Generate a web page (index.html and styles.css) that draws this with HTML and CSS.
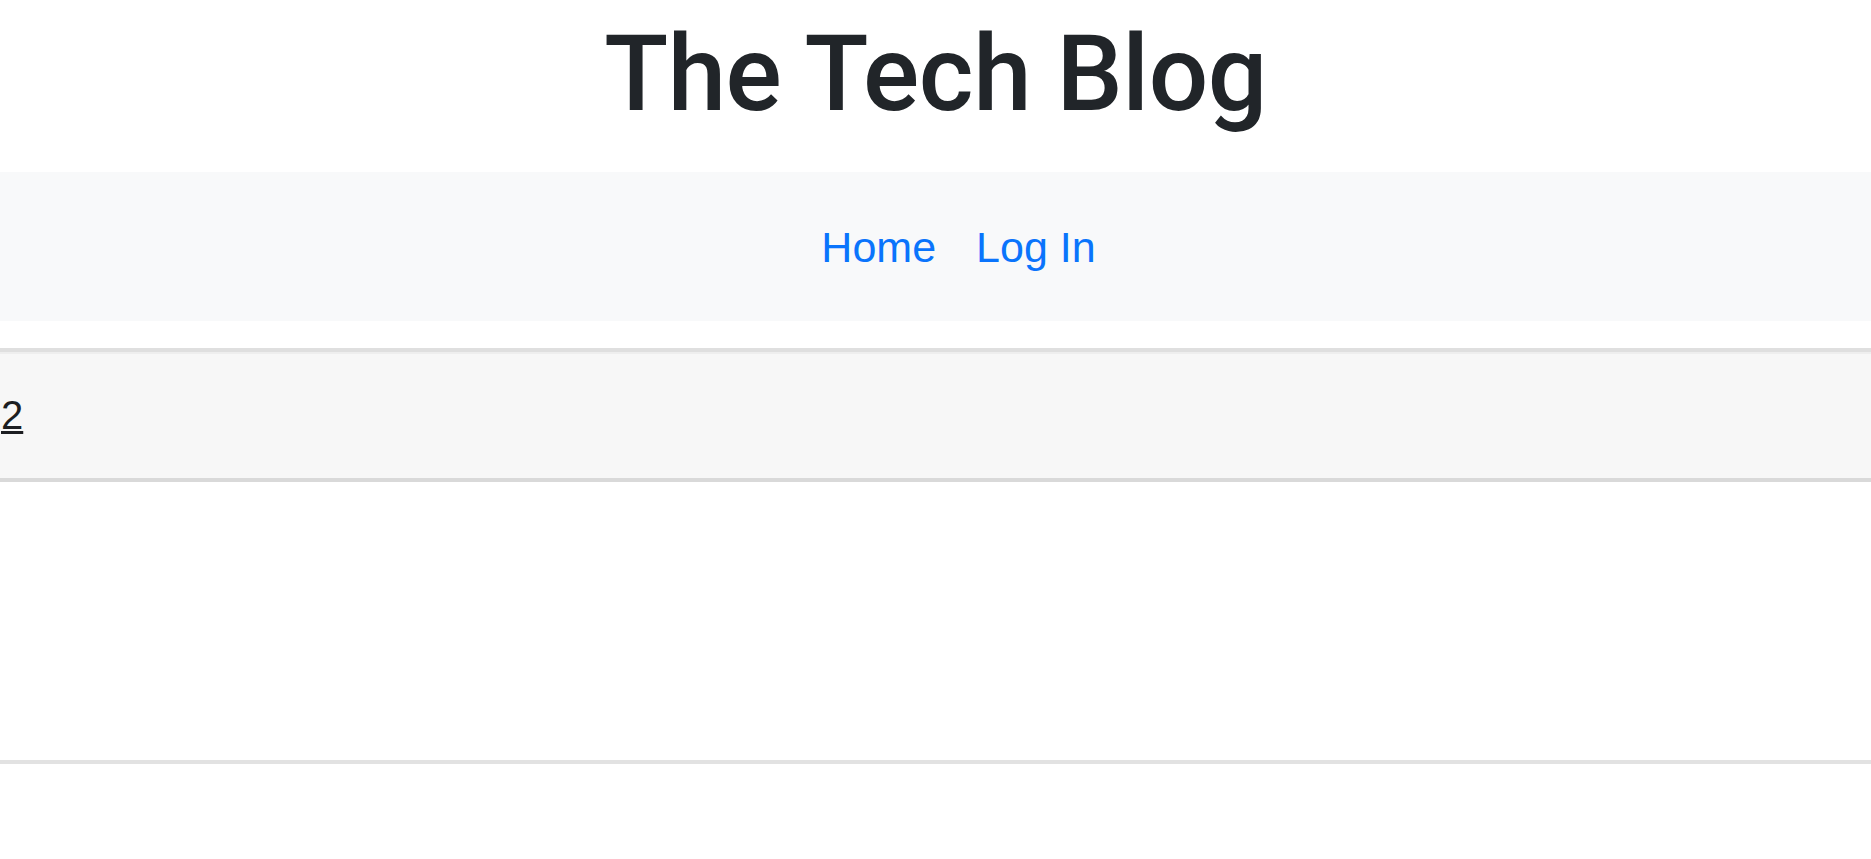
FILE: index.html
```html
<!DOCTYPE html>
<html lang="en">
<head>
<meta charset="utf-8">
<title>The Tech Blog</title>
<link rel="stylesheet" href="styles.css">
</head>
<body>
<header class="site-header">
  <h1 class="site-title">The Tech Blog</h1>
</header>
<nav class="site-nav">
  <ul class="nav-list">
    <li><a class="nav-link" href="#">Home</a></li>
    <li><a class="nav-link" href="#">Log In</a></li>
  </ul>
</nav>
<main class="main">
  <article class="post-card">
    <div class="post-header">
      <a class="post-link" href="#">2</a>
    </div>
    <div class="post-body"></div>
  </article>
</main>
</body>
</html>
```

FILE: styles.css
```css
html, body {
  margin: 0;
  padding: 0;
  background: #ffffff;
}

body {
  font-family: "Liberation Sans", Arial, sans-serif;
  color: #212529;
  overflow: hidden;
}

.site-header {
  padding: 15px 0 37px;
  text-align: center;
}

.site-title {
  margin: 0;
  font-family: Roboto, "Liberation Sans", sans-serif;
  font-weight: 500;
  font-size: 105px;
  line-height: 120px;
  letter-spacing: -0.5px;
  color: #212529;
}

.site-nav {
  height: 149px;
  background: #f8f9fa;
  display: flex;
  align-items: center;
  justify-content: center;
}

.nav-list {
  list-style: none;
  margin: 0;
  padding: 0 0 0 46px;
  display: flex;
  gap: 40px;
}

.nav-link {
  font-size: 43px;
  line-height: 50px;
  color: #0a74fc;
  text-decoration: none;
}

.main {
  padding-top: 27px;
}

.post-card {
  border-bottom: 4px solid #e2e2e2;
}

.post-header {
  height: 126px;
  background: #f7f7f7;
  border-top: 4px solid #dfdfdf;
  border-bottom: 4px solid #d9d9d9;
  box-shadow: inset 0 2px 0 #eeeeee;
  display: flex;
  align-items: center;
}

.post-link {
  margin-left: 1px;
  font-size: 40px;
  line-height: 50px;
  color: #1c1e21;
  text-decoration: underline;
  text-decoration-thickness: 3px;
}

.post-body {
  height: 278px;
}
```
